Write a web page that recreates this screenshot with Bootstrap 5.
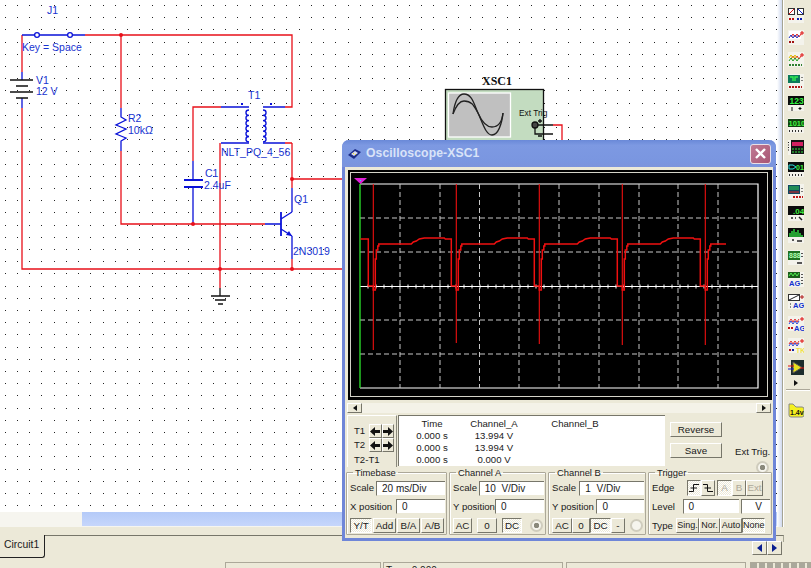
<!DOCTYPE html>
<html lang="en">
<head>
  <meta charset="UTF-8" />
  <meta name="viewport" content="width=device-width, initial-scale=1" />
  <title>Oscilloscope-XSC1</title>
  <link href="https://cdn.jsdelivr.net/npm/bootstrap@5.3.2/dist/css/bootstrap.min.css" rel="stylesheet" />
  <style>
    body { width: 811px; height: 568px; overflow: hidden; background: #ece9d8; font-family: "Liberation Sans", Arial, sans-serif; font-size: 9.6px; color: #1a1a1a; line-height: 1; }
    .desk { position: relative; width: 811px; height: 568px; overflow: hidden; }

    /* workspace */
    .sheet-col { width: 777px; }
    .sheet { height: 512px; background: #fff; overflow: hidden; }
    .sheet svg { display: block; }
    .sheet text { font-family: "Liberation Sans", Arial, sans-serif; font-size: 10.5px; fill: #1733d0; }
    .hbar { height: 15px; background: #f6f5ef; padding-left: 82px; }
    .hbar-thumb { height: 14px; background: linear-gradient(#b4caf8, #c6d6fb); }
    .vbar { width: 6px; background: linear-gradient(90deg, #fff, #cfd9ef); border-right: 1px solid #a5a493; }
    .toolbox { width: 28px; padding: 8px 0 0 4px; gap: 7px; border-left: 1px solid #fff; }
    .tool { width: 16px; height: 15px; display: block; }
    .tool text { font-family: "Liberation Sans", Arial, sans-serif; font-weight: 700; }
    .tool-sep { width: 24px; border-top: 1px solid #aca899; border-bottom: 1px solid #fff; margin: 0 0 5px -2px; }
    .tool-more { width: 0; height: 0; margin: -2px 0 -4px 6px; border-left: 4px solid #111; border-top: 3px solid transparent; border-bottom: 3px solid transparent; }

    /* bottom strip */
    .strip { height: 41px; }
    .tab-row { height: 31px; padding-top: 8px; }
    .circuit-tab { width: 45px; height: 23px; padding: 5px 0 0 4px; font-size: 10.4px; border-right: 1px solid #222; border-bottom: 1px solid #222; border-radius: 0 0 3px 0; }
    .tab-rest { width: 739px; height: 7px; border-top: 1px solid #77766a; border-right: 1px solid #a5a493; }
    .page-btns { position: absolute; left: 752px; top: 541px; }
    .page-btn { width: 15px; height: 14px; border-right: 1px solid #77766a; border-bottom: 1px solid #77766a; border-top: 1px solid #fff; border-left: 1px solid #fff; }
    .tri-l, .tri-r { width: 0; height: 0; border-top: 4px solid transparent; border-bottom: 4px solid transparent; }
    .tri-l { border-right: 5px solid #0a1f90; }
    .tri-r { border-left: 5px solid #0a1f90; }
    .status-row { padding-left: 225px; height: 6px; margin-top: 4px; }
    .status-cell { border: 1px solid #aca899; border-bottom: 0; height: 8px; padding: 3px 0 0 3px; font-size: 10px; overflow: hidden; }
    .sc-a { width: 156px; }
    .sc-b { width: 180px; margin-left: 2px; padding-left: 2px; }
    .sc-c { width: 180px; margin-left: 3px; }
    .sc-d { width: 61px; margin-left: 4px; background: repeating-linear-gradient(90deg, #aaa89b 0 6px, #ece9d8 6px 8px); }

    /* instrument window */
    .osc-win { position: absolute; left: 342px; top: 140px; width: 434px; height: 401px; border: solid #6f86d8; border-width: 0 3px 3px; border-radius: 7px 7px 0 0; }
    .osc-title { height: 27px; margin: 0 -3px; padding: 0 5px; gap: 4px; border-radius: 7px 7px 0 0; background: linear-gradient(#6a89d8, #7d99e2 20%, #7a96e0 80%, #7d94dc); }
    .osc-title span { font-size: 12.2px; font-weight: 700; color: #d9e3f8; letter-spacing: .1px; }
    .osc-close { width: 21px; height: 20px; padding: 0; border: 1px solid #e9dfe6; border-radius: 3px; background: linear-gradient(135deg, #c07a94, #a85674); }
    .osc-body { height: 371px; padding-top: 3px; background: #ece9d8; }
    .scope { display: block; margin: 0 0 0 3px; }
    .scope-bar { height: 10px; margin: 3px 2px 0 2px; background: #f4f2e8; }
    .bar-end { width: 15px; background: #ece9d8; border-top: 1px solid #fff; border-left: 1px solid #fff; border-right: 1px solid #77766a; border-bottom: 1px solid #77766a; }
    .tri-s-l, .tri-s-r { width: 0; height: 0; border-top: 3px solid transparent; border-bottom: 3px solid transparent; }
    .tri-s-l { border-right: 4px solid #111; }
    .tri-s-r { border-left: 4px solid #111; }
    .cursor-row { height: 52px; margin-top: 2px; padding-left: 2px; }
    .t-panel { width: 50px; height: 52px; padding: 8px 0 0 6px; border: 1px solid #fff; border-right: 1px solid #8a897c; border-bottom: 0; }
    .t-line { height: 14px; }
    .t-label { width: 15px; display: block; margin: 0; }
    .t-last { height: 14px; padding-top: 3px; }
    .arrow-btn { width: 12.5px; height: 14px; padding: 0; }
    .readout { width: 267px; height: 51px; margin-left: 1px; padding: 2px 0 0; background: #fff; border-top: 1px solid #77766a; border-left: 1px solid #77766a; display: grid; grid-template-columns: 66px 58px 104px; grid-auto-rows: 12px; text-align: center; align-items: center; }
    .side-actions { width: 52px; margin: 7px 0 0 5px; gap: 6px; }
    .side-actions .mbtn { height: 15px; }
    .ext-trig { margin: 32px 0 0 13px; width: 38px; }
    .ext-trig .rad { margin: 4px 0 0 21px; }

    .groups { height: 67px; margin: 1px 0 0 1px; gap: 2px; }
    .grp { margin: 0; padding: 0 1px 1px 3px; border: 1px solid #aca899; border-radius: 1px; min-width: 0; box-shadow: inset 1px 1px 0 #fff; }
    .grp legend { float: none; width: auto; margin: 0 0 0 3px; padding: 0 2px; font-size: 9.4px; line-height: 9px; }
    .g-time { width: 101px; }
    .g-cha { width: 97px; }
    .g-chb { width: 98px; }
    .g-trig { width: 124px; }
    .row-top { height: 16px; margin-top: 3px; }
    .row-mid { height: 15px; margin-top: 3px; }
    .row-btn { height: 15px; margin-top: 4px; }
    .mbtn { padding: 0; font-size: 9.8px; line-height: 1; color: #1a1a1a; background: #ece9d8; border: 1px solid; border-color: #fff #77766a #77766a #fff; border-radius: 0; white-space: nowrap; }
    .mbtn.on { border-color: #77766a #fff #fff #77766a; background: repeating-conic-gradient(#fff 0 25%, #ece9d8 0 50%) 0 0 / 2px 2px; }
    .mbtn.off { color: #aca899; }
    .type-btn { font-size: 9px; }
    .fld { height: 15px; padding: 2px 0 0 5px; font-size: 10px; background: #fff; border-top: 1px solid #77766a; border-left: 1px solid #77766a; border-bottom: 1px solid #ece9d8; overflow: hidden; white-space: pre; }
    .rad { width: 13px; height: 13px; border-radius: 50%; border: 2px solid #cfccbd; background: #f6f5ee; flex: none; }
    .rad.dot { background: radial-gradient(circle, #8a897c 0 2.5px, #f6f5ee 3px); }

    .lbl-24 { width: 24px; } .lbl-26 { width: 26px; } .lbl-28 { width: 28px; } .lbl-32 { width: 32px; } .lbl-35 { width: 35px; } .lbl-42 { width: 42px; } .lbl-46 { width: 46px; }
    .w-14 { width: 14px; } .w-15 { width: 15px; } .w-17 { width: 17px; } .w-18 { width: 18px; } .w-19 { width: 19px; } .w-20 { width: 20px; } .w-21 { width: 21px; } .w-22 { width: 22px; } .w-23 { width: 23px; } .w-30 { width: 30px; } .w-49 { width: 49px; } .w-50 { width: 50px; } .w-66 { width: 66px; } .w-69 { width: 69px; }
    .gap-1px { gap: 1px; } .ms-5px { margin-left: 5px; } .ms-2px { margin-left: 2px; } .ms-8px { margin-left: 8px; }
    .edge-svg { display: block; margin: auto; }
  </style>
</head>
<body>
  <div class="desk">
    <div class="d-flex">
      <div class="sheet-col">
        <div class="sheet">
          <svg id="circuito" width="777" height="512" viewBox="0 0 777 512" fill="none" stroke-width="1.3">
            <path id="grade" fill="#222" stroke="none" shape-rendering="crispEdges" />
            <!-- red wires -->
            <path stroke="#e8101a" d="M22 35V72M22 108V269H342M85 35H292V107H285M121 35V108M121 151V224H265M193 161V107H221M220 143V288M292 143H285M292 143V188M292 179H342M292 259V269" />
            <path stroke="#e8101a" d="M553 125H562V141" />
            <!-- blue parts -->
            <path stroke="#0a12d8" d="M22 35H34M40 35H67M73 35H85M22 72V80M22 98V108M121 108V117L126 120L116 125L126 129L116 134L126 138L121 141V151M193 161V179M193 188V224" />
            <circle cx="37" cy="35" r="2.4" stroke="#0a12d8" fill="#fff" />
            <circle cx="70" cy="35" r="2.4" stroke="#0a12d8" fill="#fff" />
            <path stroke="#0a12d8" d="M221 107H249M221 143H249M263 107H285M263 143H285M265 224H281M292 188V212M292 236V259" />
            <path stroke="#0a12d8" d="M249 110a3 2.6 0 1 0 0 5.3a3 2.6 0 1 0 0 5.3a3 2.6 0 1 0 0 5.3a3 2.6 0 1 0 0 5.3a3 2.6 0 1 0 0 5.3a3 2.6 0 1 0 0 5.3" />
            <path stroke="#0a12d8" d="M263 110a3 2.6 0 1 1 0 5.3a3 2.6 0 1 1 0 5.3a3 2.6 0 1 1 0 5.3a3 2.6 0 1 1 0 5.3a3 2.6 0 1 1 0 5.3a3 2.6 0 1 1 0 5.3" />
            <path stroke="#0a12d8" stroke-width="2.2" d="M184 180H203M184 187H203" />
            <path stroke="#0a12d8" stroke-width="1.8" d="M281 212V236" />
            <path stroke="#0a12d8" d="M281 219L292 212M281 229L292 236" />
            <path fill="#0a12d8" stroke="none" d="M292 236L286 235L289 231Z" />
            <path stroke="#111" d="M10 80H33M16 86H28M10 92H33M16 98H28M220 288V296M211 296H230M215 300H226M218 304H223" />
            <rect x="241" y="103" width="2" height="2" fill="#0a12d8" />
            <rect x="270" y="103" width="2" height="2" fill="#0a12d8" />
            <g fill="#e8101a" stroke="none">
              <circle cx="121" cy="35" r="2" /><circle cx="193" cy="224" r="2" /><circle cx="292" cy="179" r="2" /><circle cx="220" cy="269" r="2" /><circle cx="292" cy="269" r="2" />
            </g>
            <g stroke="none">
              <text x="47" y="14">J1</text>
              <text x="22" y="51">Key = Space</text>
              <text x="36" y="84">V1</text>
              <text x="36" y="95">12 V</text>
              <text x="128" y="122">R2</text>
              <text x="128" y="134">10k&#937;</text>
              <text x="248" y="99">T1</text>
              <text x="221" y="156">NLT_PQ_4_56</text>
              <text x="205" y="177">C1</text>
              <text x="204" y="189">2.4uF</text>
              <text x="294" y="203">Q1</text>
              <text x="293" y="255">2N3019</text>
            </g>
            <!-- XSC1 symbol -->
            <text x="482" y="85" style="font-family:'Liberation Serif',serif;font-weight:700;font-size:12px;fill:#111">XSC1</text>
            <rect x="445.5" y="89.5" width="98" height="60" fill="#c3dcc0" stroke="#111" />
            <rect x="448.5" y="93" width="62" height="44" fill="#c0c0c0" stroke="#fff" />
            <path stroke="#222" d="M453 114C455 100 459 94 464 94C472 94 474 104 478 113C483 124 486 135 492 135C498 135 502 124 503 113" />
            <path stroke="#222" d="M453 114C456 106 460 101 464 101C472 101 474 106 478 113C482 122 486 127 492 127C498 127 502 122 503 113" />
            <text x="519" y="116" style="font-size:8.4px;fill:#111">Ext Trig</text>
            <path stroke="#111" d="M535 125H553M535 125V134H553" />
            <circle cx="535" cy="125" r="3" fill="#444" stroke="#111" />
            <path stroke="#111" d="M538 121H542M540 119V123M538 136H542" />
          </svg>
        </div>
        <div class="hbar"><div class="hbar-thumb"></div></div>
      </div>
      <div class="vbar"></div>
      <div class="toolbox d-flex flex-column" id="caixaFerramentas"></div>
    </div>

    <div class="strip">
      <div class="tab-row d-flex">
        <div class="circuit-tab">Circuit1</div>
        <div class="tab-rest"></div>
      </div>
      <div class="status-row d-flex">
        <div class="status-cell sc-a"></div>
        <div class="status-cell sc-b">Tran: 0.000 s</div>
        <div class="status-cell sc-c"></div>
        <div class="status-cell sc-d"></div>
      </div>
    </div>
    <div class="page-btns d-flex">
      <div class="page-btn d-flex align-items-center justify-content-center"><div class="tri-l"></div></div>
      <div class="page-btn d-flex align-items-center justify-content-center"><div class="tri-r"></div></div>
    </div>

    <!-- oscilloscope window -->
    <div class="osc-win">
      <div class="osc-title d-flex align-items-center">
        <svg width="15" height="12" viewBox="0 0 15 12"><path d="M1 7L8 1L14 4L7 11Z" fill="#1c2c88" /><path d="M4 6L8 3L11 5L7 8Z" fill="#d8dcf0" /><path d="M6 5h1v1H6zM8 6h1v1H8z" fill="#e8d820" /></svg>
        <span class="flex-grow-1">Oscilloscope-XSC1</span>
        <button class="osc-close d-flex align-items-center justify-content-center" type="button" aria-label="Close">
          <svg width="13" height="13" viewBox="0 0 13 13"><path d="M2 2L11 11M11 2L2 11" stroke="#fff" stroke-width="2.4" /></svg>
        </button>
      </div>
      <div class="osc-body">
        <svg class="scope" id="tela" width="424" height="230" viewBox="348 170 424 230" fill="none">
          <rect x="348" y="170" width="424" height="230" fill="#000" />
          <rect x="350.5" y="172.5" width="417" height="224" stroke="#d4d3c8" />
          <g id="grade-tela"></g>
          <path d="M360 184V388" stroke="#2ee82e" stroke-width="1.3" />
          <path d="M354 178H367L360.5 184Z" fill="#e020d8" />
          <path d="M360 180h1v1h-1z" fill="#2ee" />
          <path id="traco" stroke="#f01010" stroke-width="1.5" />
          <path id="picos" stroke="#f01010" stroke-width="1.1" />
        </svg>
        <div class="scope-bar d-flex justify-content-between">
          <div class="bar-end d-flex align-items-center justify-content-center"><div class="tri-s-l"></div></div>
          <div class="bar-end d-flex align-items-center justify-content-center"><div class="tri-s-r"></div></div>
        </div>

        <div class="cursor-row d-flex">
          <div class="t-panel">
            <div class="t-line d-flex align-items-center">
              <span class="t-label">T1</span>
              <button class="mbtn arrow-btn" type="button"><svg class="edge-svg" width="10" height="9" viewBox="0 0 10 9"><path d="M0 4.5L5 0V3H10V6H5V9Z" fill="#111" /></svg></button>
              <button class="mbtn arrow-btn" type="button"><svg class="edge-svg" width="10" height="9" viewBox="0 0 10 9"><path d="M10 4.5L5 0V3H0V6H5V9Z" fill="#111" /></svg></button>
            </div>
            <div class="t-line d-flex align-items-center">
              <span class="t-label">T2</span>
              <button class="mbtn arrow-btn" type="button"><svg class="edge-svg" width="10" height="9" viewBox="0 0 10 9"><path d="M0 4.5L5 0V3H10V6H5V9Z" fill="#111" /></svg></button>
              <button class="mbtn arrow-btn" type="button"><svg class="edge-svg" width="10" height="9" viewBox="0 0 10 9"><path d="M10 4.5L5 0V3H0V6H5V9Z" fill="#111" /></svg></button>
            </div>
            <div class="t-last">T2-T1</div>
          </div>
          <div class="readout">
            <div>Time</div><div>Channel_A</div><div>Channel_B</div>
            <div>0.000 s</div><div>13.994 V</div><div></div>
            <div>0.000 s</div><div>13.994 V</div><div></div>
            <div>0.000 s</div><div>0.000 V</div><div></div>
          </div>
          <div class="side-actions d-flex flex-column">
            <button class="mbtn" type="button">Reverse</button>
            <button class="mbtn" type="button">Save</button>
          </div>
          <div class="ext-trig">
            <div>Ext Trig.</div>
            <div class="rad dot"></div>
          </div>
        </div>

        <div class="groups d-flex">
          <fieldset class="grp g-time">
            <legend>Timebase</legend>
            <div class="row-top d-flex align-items-center"><span class="lbl-26">Scale</span><div class="fld w-69">20 ms/Div</div></div>
            <div class="row-mid d-flex align-items-center"><span class="lbl-46">X position</span><div class="fld w-49">0</div></div>
            <div class="row-btn d-flex gap-1px">
              <button class="mbtn on w-22" type="button">Y/T</button>
              <button class="mbtn w-23" type="button">Add</button>
              <button class="mbtn w-23" type="button">B/A</button>
              <button class="mbtn w-23" type="button">A/B</button>
            </div>
          </fieldset>
          <fieldset class="grp g-cha">
            <legend>Channel A</legend>
            <div class="row-top d-flex align-items-center"><span class="lbl-26">Scale</span><div class="fld w-66">10  V/Div</div></div>
            <div class="row-mid d-flex align-items-center"><span class="lbl-42">Y position</span><div class="fld w-49">0</div></div>
            <div class="row-btn d-flex align-items-center">
              <button class="mbtn w-19 h-100" type="button">AC</button>
              <button class="mbtn w-20 h-100 ms-5px" type="button">0</button>
              <button class="mbtn on w-20 h-100 ms-5px" type="button">DC</button>
              <div class="rad dot ms-8px"></div>
            </div>
          </fieldset>
          <fieldset class="grp g-chb">
            <legend>Channel B</legend>
            <div class="row-top d-flex align-items-center"><span class="lbl-28">Scale</span><div class="fld w-66">1  V/Div</div></div>
            <div class="row-mid d-flex align-items-center"><span class="lbl-46">Y position</span><div class="fld w-49">0</div></div>
            <div class="row-btn d-flex align-items-center">
              <button class="mbtn w-20 h-100" type="button">AC</button>
              <button class="mbtn w-18 h-100" type="button">0</button>
              <button class="mbtn on w-21 h-100" type="button">DC</button>
              <button class="mbtn w-14 h-100" type="button">-</button>
              <div class="rad ms-5px"></div>
            </div>
          </fieldset>
          <fieldset class="grp g-trig">
            <legend>Trigger</legend>
            <div class="row-top d-flex align-items-center">
              <span class="lbl-35">Edge</span>
              <button class="mbtn on w-14 h-100" type="button"><svg class="edge-svg" width="10" height="10" viewBox="0 0 10 10"><path d="M0 8.5H4.5V1.5H10M1.5 5H8" stroke="#111" fill="none" /></svg></button>
              <button class="mbtn w-14 h-100" type="button"><svg class="edge-svg" width="10" height="10" viewBox="0 0 10 10"><path d="M0 1.5H4.5V8.5H10M1.5 5H8" stroke="#111" fill="none" /></svg></button>
              <button class="mbtn on off w-15 h-100 ms-2px" type="button">A</button>
              <button class="mbtn off w-14 h-100" type="button">B</button>
              <button class="mbtn off w-17 h-100" type="button">Ext</button>
            </div>
            <div class="row-mid d-flex align-items-center"><span class="lbl-32">Level</span><div class="fld w-50">0</div><div class="fld w-30 ms-2px text-center">V</div></div>
            <div class="row-btn d-flex align-items-center">
              <span class="lbl-24">Type</span>
              <button class="mbtn type-btn w-23 h-100" type="button">Sing.</button>
              <button class="mbtn type-btn w-21 h-100" type="button">Nor.</button>
              <button class="mbtn type-btn w-22 h-100" type="button">Auto</button>
              <button class="mbtn type-btn on w-23 h-100" type="button">None</button>
            </div>
          </fieldset>
        </div>
      </div>
    </div>
  </div>

  <script src="https://cdn.jsdelivr.net/npm/bootstrap@5.3.2/dist/js/bootstrap.bundle.min.js"></script>
  <script>
    // dotted sheet background
    let pontos = "";
    for (let y = 5; y < 512; y += 12.2) {
      for (let x = 4.5; x < 777; x += 12.25) {
        pontos += `M${Math.round(x)} ${Math.round(y)}h1v1h-1z`;
      }
    }
    document.getElementById("grade").setAttribute("d", pontos);

    // scope grid: 10 x 6 divisions
    const xs = [360, 400, 440, 479.5, 519, 559, 599, 639, 678, 718, 758];
    const ys = [184, 218, 252, 286.5, 320, 354, 388];
    let grade = `<path d="M360 184H758V388H360" stroke="#fff" stroke-width="1.2"/>`;
    grade += `<path d="M360 286.5H758" stroke="#fff" stroke-width="1.2"/>`;
    let ticks = "";
    for (let x = 368; x < 758; x += 8) ticks += `M${x} 284.5v4`;
    grade += `<path d="${ticks}" stroke="#fff"/>`;
    xs.slice(1, -1).forEach(x => {
      grade += `<path d="M${x} 184V388" stroke="#c8c8c8" stroke-dasharray="5 3"/>`;
    });
    ys.forEach((y, i) => {
      if (i > 0 && i < 6 && i !== 3) grade += `<path d="M360 ${y}H758" stroke="#c8c8c8" stroke-dasharray="5 3"/>`;
    });
    document.getElementById("grade-tela").innerHTML = grade;

    // trace of the collector voltage, one period = 83px
    const periodo = [[0,286],[5,286],[5,290],[7,290],[7,281],[7,259],[8,259],[8,250],[9.5,250],[9.5,246],[10.5,246],[10.5,244],[43,244],[45,242],[48,241],[51,239],[56,238],[76,238],[77,239],[83,239]];
    const fimPico = [350, 343, 344, 345, 345];
    let traco = "M360.5 239H368.3";
    let picos = "";
    for (let i = 0; i < 5; i++) {
      const x0 = 368.3 + i * 83;
      periodo.forEach(p => {
        if (x0 + p[0] <= 726) traco += `L${(x0 + p[0]).toFixed(1)} ${p[1]}`;
      });
      picos += `M${(x0 + 5).toFixed(1)} 184V${fimPico[i]}`;
    }
    traco += "L726 244";
    document.getElementById("traco").setAttribute("d", traco);
    document.getElementById("picos").setAttribute("d", picos);

    // instrument toolbox
    const onda = "M3 7l2-3 2 3 2-3 2 3 2-3";
    const chapa = '<rect width="16" height="15" fill="#f4f3ec"/>';
    const ag = '<text x="1" y="14" font-size="7.5" fill="#1030d0">AG</text>';
    const icones = [
      chapa + '<rect x="0.5" y="0.5" width="6" height="6" fill="#fff" stroke="#333"/><path d="M1 6L6 1" stroke="#e01010"/><rect x="9.5" y="0.5" width="6" height="6" fill="#fff" stroke="#333"/><path d="M10 1L15 6" stroke="#1020d0"/><path d="M1 11h6" stroke="#c01010" stroke-width="2" stroke-dasharray="2 1"/><path d="M9 11h6" stroke="#1020b0" stroke-width="2" stroke-dasharray="2 1"/>',
      chapa + `<rect x="1" y="1" width="12" height="8" fill="#fff"/><path d="${onda}" stroke="#e02020" fill="none"/><path d="M1 8l2-3 2 3 2-3 2 3 2-3" stroke="#2030c0" fill="none"/><path d="M14 1v4M12 3h4" stroke="#e01010"/><path d="M1 12h6" stroke="#a01010" stroke-width="2" stroke-dasharray="2 1"/>`,
      chapa + `<path d="${onda}" stroke="#e02020" fill="none"/><path d="M1 9l2-3 2 3 2-3 2 3 2-3" stroke="#20a020" fill="none"/><path d="M1 6l2-3 2 3 2-3 2 3" stroke="#e0c000" fill="none"/><path d="M14 1v4M12 3h4" stroke="#e01010"/><path d="M1 13h13" stroke="#308030" stroke-width="2" stroke-dasharray="2 1"/>`,
      chapa + '<rect y="1" width="12" height="8" fill="#0c7a5a"/><path d="M2 3h3v4M7 7V3h3" stroke="#30f050" stroke-width="1.4" fill="none"/><path d="M14 3v1M14 6v1" stroke="#111"/>' + '<path d="M1 13h13" stroke="#b01818" stroke-width="2" stroke-dasharray="2 1"/>',
      chapa + '<rect width="16" height="9" fill="#0b0b0b"/><text x="1.5" y="8" font-size="8.5" fill="#30f040">123</text><path d="M3 12h2M3 14h2M12 11v3M10.5 12.5h3" stroke="#111"/>',
      chapa + '<rect y="1" width="16" height="8" fill="#104010"/><text x="0.5" y="8" font-size="7.5" fill="#40f040">1010</text><path d="M1 13h14" stroke="#333" stroke-width="2" stroke-dasharray="1 2"/>',
      chapa + '<rect x="3" width="13" height="14" fill="#141414"/><rect x="4" y="2" width="11" height="4" fill="#d02060"/><path d="M4 9h11M4 12h11" stroke="#30e040" stroke-dasharray="2 1"/><path d="M0 2v10" stroke="#222" stroke-dasharray="1 1.5" stroke-width="2"/>',
      chapa + '<rect width="16" height="10" fill="#0b0b0b"/><path d="M1 3h4l3 2-3 2H1Z" stroke="#2ce0e0" fill="none"/><text x="8" y="8" font-size="7" fill="#40f040">01</text><path d="M1 13h14" stroke="#333" stroke-width="2" stroke-dasharray="1 2"/>',
      chapa + '<rect y="1" width="12" height="9" fill="#104860"/><path d="M1 3h10M1 5h10" stroke="#30d050"/><path d="M1 8h10" stroke="#e02020"/><path d="M14 4v1M14 7v1" stroke="#111"/><path d="M5 13h10" stroke="#c01818" stroke-width="2" stroke-dasharray="2 1"/>',
      chapa + '<rect width="16" height="9" fill="#0b0b0b"/><text x="5" y="8" font-size="8" fill="#40f040">.04</text><path d="M3 12h2M7 12h1M11 11l3 3" stroke="#222" stroke-width="1.5"/>',
      chapa + '<rect width="16" height="9" fill="#0b0b0b"/><path d="M2 9V5M4 9V3M6 9V1M8 9V4M10 9V2M12 9V5M14 9V7" stroke="#30e040" stroke-width="1.4"/><path d="M4 12h2M9 13h5" stroke="#222" stroke-width="1.5"/>',
      chapa + '<rect y="1" width="12" height="9" fill="#207020"/><text x="1" y="8" font-size="7" fill="#b0ffb0">888</text><path d="M14 3v1M14 6v1M9 13h5" stroke="#222" stroke-width="1.5"/>',
      chapa + `<rect width="12" height="6" fill="#1c5c1c"/><path d="M1 4l2-3 2 3 2-3 2 3 2-3" stroke="#50f050" fill="none"/>${ag}<path d="M14 2v1M14 5v1M14 8v1M14 11v1" stroke="#222" stroke-width="1.5"/>`,
      chapa + '<rect x="0.5" y="0.5" width="11" height="6" fill="#fff" stroke="#333"/><path d="M1 6L11 1" stroke="#222"/><text x="5" y="14" font-size="7.5" fill="#1030d0">AG</text><path d="M14 1v4M12 3h4" stroke="#b01818"/><path d="M2 10h1M2 13h1" stroke="#222"/>',
      chapa + `<path d="M1 6l2-3 2 3 2-3 2 3 2-3" stroke="#e03030" fill="none"/><path d="M1 8l2-3 2 3 2-3 2 3 2-3" stroke="#3040d0" fill="none"/><path d="M14 1v4M12 3h4" stroke="#e01010"/><text x="6" y="14.5" font-size="7.5" fill="#1030d0">AG</text><path d="M0 12h5" stroke="#c01818" stroke-width="2" stroke-dasharray="2 1"/>`,
      chapa + `<path d="M1 6l2-3 2 3 2-3 2 3 2-3" stroke="#e03030" fill="none"/><path d="M1 8l2-3 2 3 2-3 2 3 2-3" stroke="#3040d0" fill="none"/><path d="M14 1v4M12 3h4" stroke="#e01010"/><text x="8" y="14.5" font-size="7" fill="#f0e040">TK</text><path d="M1 12h2" stroke="#c01818" stroke-width="2"/><path d="M4 12h2" stroke="#1020a0" stroke-width="2"/>`,
      '<rect x="3" width="13" height="15" fill="#1c2c2c"/><path d="M5 2L14 7.5L5 13Z" fill="#e8e020" stroke="#555"/><path d="M0 6h6M12 8h4" stroke="#e01010"/><path d="M0 9h6" stroke="#1020d0"/>',
    ];
    const caixa = document.getElementById("caixaFerramentas");
    icones.forEach(svg => {
      caixa.insertAdjacentHTML("beforeend", `<svg class="tool" viewBox="0 0 16 15">${svg}</svg>`);
    });
    caixa.insertAdjacentHTML("beforeend", '<div class="tool-more"></div><div class="tool-sep"></div>');
    caixa.insertAdjacentHTML("beforeend", '<svg class="tool" viewBox="0 0 16 15"><path d="M1 4L1 1L5 1L8 4H14Q16 4 16 6V12Q16 14 14 14H3Q1 14 1 12Z" fill="#f4f020" stroke="#888"/><text x="2" y="12" font-size="7" fill="#111">1.4v</text></svg>');
  </script>
</body>
</html>
